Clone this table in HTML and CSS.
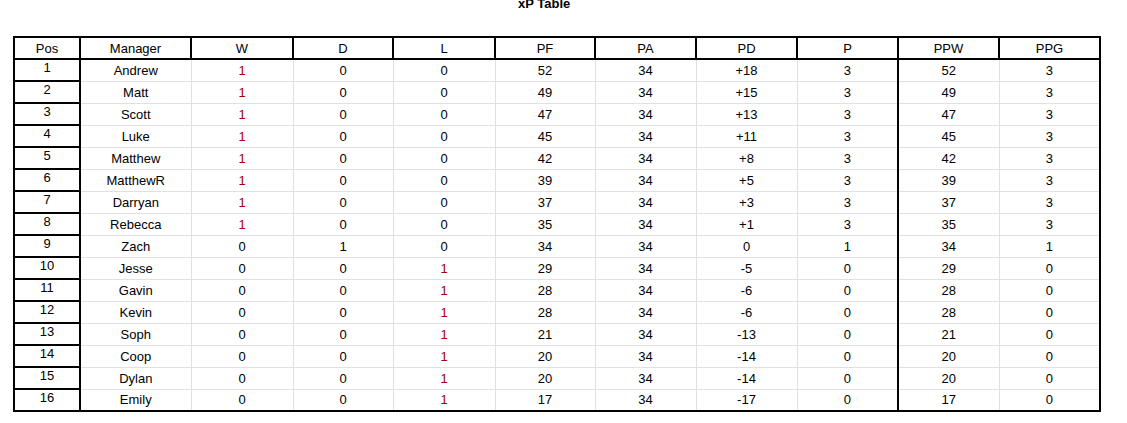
FILE: index.html
```html
<!DOCTYPE html>
<html>
<head>
<meta charset="utf-8">
<title>xP Table</title>
<link rel="stylesheet" href="styles.css">
</head>
<body>
<div class="title">xP Table</div>
<table class="xp">
  <colgroup>
    <col class="c-pos"><col class="c-mgr"><col class="c-w"><col class="c-d"><col class="c-l"><col class="c-pf"><col class="c-pa"><col class="c-pd"><col class="c-p"><col class="c-ppw"><col class="c-ppg">
  </colgroup>
  <thead>
    <tr><th>Pos</th><th>Manager</th><th>W</th><th>D</th><th>L</th><th>PF</th><th>PA</th><th>PD</th><th>P</th><th>PPW</th><th>PPG</th></tr>
  </thead>
  <tbody>
    <tr><td class="pos">1</td><td>Andrew</td><td class="red">1</td><td>0</td><td>0</td><td>52</td><td>34</td><td>+18</td><td>3</td><td class="ppw">52</td><td class="ppg">3</td></tr>
    <tr><td class="pos">2</td><td>Matt</td><td class="red">1</td><td>0</td><td>0</td><td>49</td><td>34</td><td>+15</td><td>3</td><td class="ppw">49</td><td class="ppg">3</td></tr>
    <tr><td class="pos">3</td><td>Scott</td><td class="red">1</td><td>0</td><td>0</td><td>47</td><td>34</td><td>+13</td><td>3</td><td class="ppw">47</td><td class="ppg">3</td></tr>
    <tr><td class="pos">4</td><td>Luke</td><td class="red">1</td><td>0</td><td>0</td><td>45</td><td>34</td><td>+11</td><td>3</td><td class="ppw">45</td><td class="ppg">3</td></tr>
    <tr><td class="pos">5</td><td>Matthew</td><td class="red">1</td><td>0</td><td>0</td><td>42</td><td>34</td><td>+8</td><td>3</td><td class="ppw">42</td><td class="ppg">3</td></tr>
    <tr><td class="pos">6</td><td>MatthewR</td><td class="red">1</td><td>0</td><td>0</td><td>39</td><td>34</td><td>+5</td><td>3</td><td class="ppw">39</td><td class="ppg">3</td></tr>
    <tr><td class="pos">7</td><td>Darryan</td><td class="red">1</td><td>0</td><td>0</td><td>37</td><td>34</td><td>+3</td><td>3</td><td class="ppw">37</td><td class="ppg">3</td></tr>
    <tr><td class="pos">8</td><td>Rebecca</td><td class="red">1</td><td>0</td><td>0</td><td>35</td><td>34</td><td>+1</td><td>3</td><td class="ppw">35</td><td class="ppg">3</td></tr>
    <tr><td class="pos">9</td><td>Zach</td><td>0</td><td>1</td><td>0</td><td>34</td><td>34</td><td>0</td><td>1</td><td class="ppw">34</td><td class="ppg">1</td></tr>
    <tr><td class="pos">10</td><td>Jesse</td><td>0</td><td>0</td><td class="red">1</td><td>29</td><td>34</td><td>-5</td><td>0</td><td class="ppw">29</td><td class="ppg">0</td></tr>
    <tr><td class="pos">11</td><td>Gavin</td><td>0</td><td>0</td><td class="red">1</td><td>28</td><td>34</td><td>-6</td><td>0</td><td class="ppw">28</td><td class="ppg">0</td></tr>
    <tr><td class="pos">12</td><td>Kevin</td><td>0</td><td>0</td><td class="red">1</td><td>28</td><td>34</td><td>-6</td><td>0</td><td class="ppw">28</td><td class="ppg">0</td></tr>
    <tr><td class="pos">13</td><td>Soph</td><td>0</td><td>0</td><td class="red">1</td><td>21</td><td>34</td><td>-13</td><td>0</td><td class="ppw">21</td><td class="ppg">0</td></tr>
    <tr><td class="pos">14</td><td>Coop</td><td>0</td><td>0</td><td class="red">1</td><td>20</td><td>34</td><td>-14</td><td>0</td><td class="ppw">20</td><td class="ppg">0</td></tr>
    <tr><td class="pos">15</td><td>Dylan</td><td>0</td><td>0</td><td class="red">1</td><td>20</td><td>34</td><td>-14</td><td>0</td><td class="ppw">20</td><td class="ppg">0</td></tr>
    <tr class="last"><td class="pos">16</td><td>Emily</td><td>0</td><td>0</td><td class="red">1</td><td>17</td><td>34</td><td>-17</td><td>0</td><td class="ppw">17</td><td class="ppg">0</td></tr>
  </tbody>
</table>
</body>
</html>
```

FILE: styles.css
```css
html, body {
  margin: 0;
  padding: 0;
  background: #ffffff;
}

body {
  padding: 8px;
  font-family: "Liberation Sans", Arial, sans-serif;
  font-size: 13px;
  color: #000000;
}

.title {
  margin-top: -12px;
  margin-left: 510px;
  font-weight: bold;
  font-size: 13px;
  line-height: 15px;
  height: 15px;
}

.xp {
  margin-top: 25px;
  margin-left: 5px;
  border-collapse: collapse;
  table-layout: fixed;
  width: 1088px;
}

.c-pos { width: 66px; }
.c-mgr { width: 111px; }
.c-w { width: 102px; }
.c-d { width: 100px; }
.c-l { width: 102px; }
.c-pf { width: 100px; }
.c-pa, .c-pd, .c-p, .c-ppw, .c-ppg { width: 101px; }

.xp th,
.xp td {
  padding: 0;
  text-align: center;
  vertical-align: middle;
  white-space: nowrap;
  overflow: hidden;
  line-height: 15px;
}

.xp th {
  font-weight: normal;
  height: 20px;
  border: 2px solid #000000;
}

.xp td {
  height: 20px;
  border: 1px solid #e1e1e1;
}

.xp td.pos {
  border: 2px solid #000000;
  padding-bottom: 5px;
  height: 14px;
}

.xp td.ppw {
  border-left: 2px solid #000000;
}

.xp td.ppg {
  border-right: 2px solid #000000;
}

.xp tr.last td {
  border-bottom: 2px solid #000000;
}

.xp td.red {
  color: #a40000;
}
```
